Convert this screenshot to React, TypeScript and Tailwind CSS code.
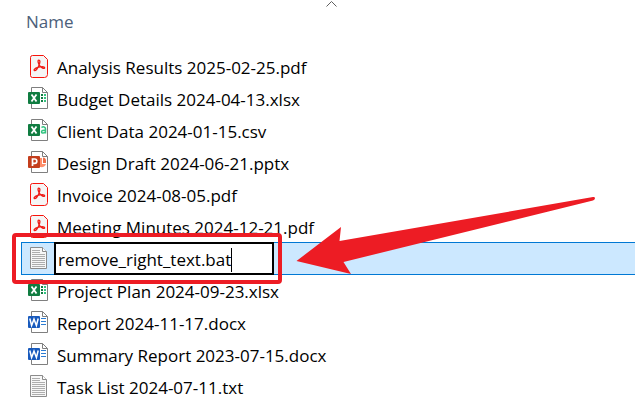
import React, { useState } from 'react';

type FileKind = 'pdf' | 'xlsx' | 'csv' | 'pptx' | 'docx' | 'txt';

const files: { name: string; kind: FileKind; editing?: boolean }[] = [
  { name: 'Analysis Results 2025-02-25.pdf', kind: 'pdf' },
  { name: 'Budget Details 2024-04-13.xlsx', kind: 'xlsx' },
  { name: 'Client Data 2024-01-15.csv', kind: 'csv' },
  { name: 'Design Draft 2024-06-21.pptx', kind: 'pptx' },
  { name: 'Invoice 2024-08-05.pdf', kind: 'pdf' },
  { name: 'Meeting Minutes 2024-12-21.pdf', kind: 'pdf' },
  { name: 'remove_right_text.bat', kind: 'txt', editing: true },
  { name: 'Project Plan 2024-09-23.xlsx', kind: 'xlsx' },
  { name: 'Report 2024-11-17.docx', kind: 'docx' },
  { name: 'Summary Report 2023-07-15.docx', kind: 'docx' },
  { name: 'Task List 2024-07-11.txt', kind: 'txt' },
];

const badgeColors = {
  xlsx: '#107c41',
  csv: '#107c41',
  pptx: '#c43e1c',
  docx: '#185abd',
};

const PdfIcon = () => (
  <>
    <path d="M4.500.5h11l4 4v15a3 3 0 0 1-3 3h-12a2 2 0 0 1-2-2v-18a2 2 0 0 1 2-2z" fill="#f5f5f5" stroke="#f7140c" />
    <path
      d="M10.700 5.200c1.800 0 1.300 2.600.2 5.200-1.100 2.500-2.800 5.400-4.300 5.200-1.500-.4.200-2.300 3.200-3.200 2.900-.9 6.800-1.200 6.900.3 0 1.400-2.800.6-4.600-1.500-1.700-1.900-2.800-6-1.400-6z"
      fill="none"
      stroke="#ee1c16"
      strokeWidth="1.300"
    />
  </>
);

const TextIcon = () => (
  <>
    <path d="M2.500.5h12l4 4v17h-16z" fill="#f7f7f7" stroke="#8b8b8b" />
    <path d="M14.500.5v4h4" fill="#fff" stroke="#8b8b8b" />
    <path d="M4 3.500h8M4 5.500h8M4 7.500h13M4 9.500h13M4 11.500h13M4 13.500h13M4 15.500h13M4 17.500h13M4 19.500h13" stroke="#adadad" />
  </>
);

const OfficeIcon: React.FC<{ kind: 'xlsx' | 'csv' | 'pptx' | 'docx' }> = ({ kind }) => (
  <>
    <path d="M3.500.5h11l5 5v16h-16z" fill="#fff" stroke="#7f7f7f" />
    <path d="M14.500.5v5h5" fill="none" stroke="#7f7f7f" />
    {kind === 'xlsx' && (
      <>
        <path d="M13 8h2M13 11h2M13 14h2" stroke="#107c41" strokeWidth="2" />
        <path d="M16 8h2M16 11h2M16 14h2" stroke="#33c481" strokeWidth="2" />
      </>
    )}
    {kind === 'csv' && (
      <path d="M13.500 8.500c1.500-1.200 4-.8 4 1.200v4.800m0-3.200c-2-.2-4 .2-4 1.500 0 1.800 3 1.600 4-.2" fill="none" stroke="#33c481" strokeWidth="1.500" />
    )}
    {kind === 'pptx' && (
      <>
        <path d="M12 7h2v6h4c-.5 2.500-3 3.500-6 3z" fill="#ff8f6b" />
        <path d="M15 6.500c2 0 3 1.500 3 3.500v2h-3z" fill="#ed6c47" />
      </>
    )}
    {kind === 'docx' && <path d="M13 7.500h5M13 10.500h5M13 13.500h5" stroke="#2b7cd3" />}
    <rect y="5" width="12" height="12" rx="1" fill={badgeColors[kind]} />
    {(kind === 'xlsx' || kind === 'csv') && <path d="M3.500 7.500l5 7M8.500 7.500l-5 7" stroke="#fff" strokeWidth="1.800" />}
    {kind === 'pptx' && <path d="M4.500 15V8h2.200c2.800 0 2.800 4.300 0 4.300H4.500" fill="none" stroke="#fff" strokeWidth="1.700" />}
    {kind === 'docx' && <path d="M1.800 7.500l1.800 7L6 8.200l2.400 6.300 1.800-7" fill="none" stroke="#fff" strokeWidth="1.500" />}
  </>
);

const FileIcon: React.FC<{ kind: FileKind }> = ({ kind }) => (
  <svg width="21" height="23" viewBox="0 0 21 23" className="shrink-0" aria-hidden="true">
    {kind === 'pdf' && <PdfIcon />}
    {kind === 'txt' && <TextIcon />}
    {kind !== 'pdf' && kind !== 'txt' && <OfficeIcon kind={kind} />}
  </svg>
);

const RenameRow: React.FC<{ name: string; kind: FileKind }> = ({ name, kind }) => {
  const [value, setValue] = useState(name);

  return (
    <li className="relative -mb-px flex h-[33px] items-stretch border-y border-l border-[#0078d4] bg-[#cce8ff] pl-1.5">
      <span className="flex w-[26px] items-center">
        <FileIcon kind={kind} />
      </span>
      <label className="-my-px flex w-[220px] items-center border-2 border-black bg-white pt-0.5 pl-0.5">
        <input
          type="text"
          aria-label="File name"
          spellCheck={false}
          value={value}
          onChange={(e) => setValue(e.target.value)}
          className="field-sizing-content h-6 bg-transparent text-black outline-none"
        />
        <span className="h-6 w-px bg-black" />
      </label>

      {/* Highlight frame and arrow, drawn over the list */}
      <span className="pointer-events-none absolute -top-2.5 -left-2.5 h-[51px] w-[270px] rounded-sm border-4 border-[#ed1c24]" />
      <svg
        width="301"
        height="80"
        viewBox="0 0 301 80"
        className="pointer-events-none absolute -bottom-px left-[274px]"
        aria-hidden="true"
      >
        <path d="M.5 66L45 32l-1.500 14L297 2q2-.3 2 1.300t-2 2.200L47.500 67l7.500 12z" fill="#ed1c24" />
      </svg>
    </li>
  );
};

const App: React.FC = () => {
  return (
    <main className="min-h-screen overflow-hidden bg-white font-['Open_Sans','Noto_Sans',sans-serif] text-[17px] leading-6 text-black">
      <button type="button" className="relative flex h-[50px] w-full items-start pt-2.5 pl-[26px] text-left text-[#4c607a]">
        Name
        <svg width="12" height="7" viewBox="0 0 12 7" className="absolute top-px left-[326px]" aria-hidden="true">
          <path d="M.5 5.500l5-5 5 5" fill="none" stroke="#5f5f5f" />
        </svg>
      </button>
      <ul className="pl-[21px]">
        {files.map((file) =>
          file.editing ? (
            <RenameRow key={file.name} name={file.name} kind={file.kind} />
          ) : (
            <li key={file.name} className="flex h-8 items-center gap-2 pl-[7px]">
              <FileIcon kind={file.kind} />
              <span className="pt-1 whitespace-nowrap">{file.name}</span>
            </li>
          )
        )}
      </ul>
    </main>
  );
};

export default App;
